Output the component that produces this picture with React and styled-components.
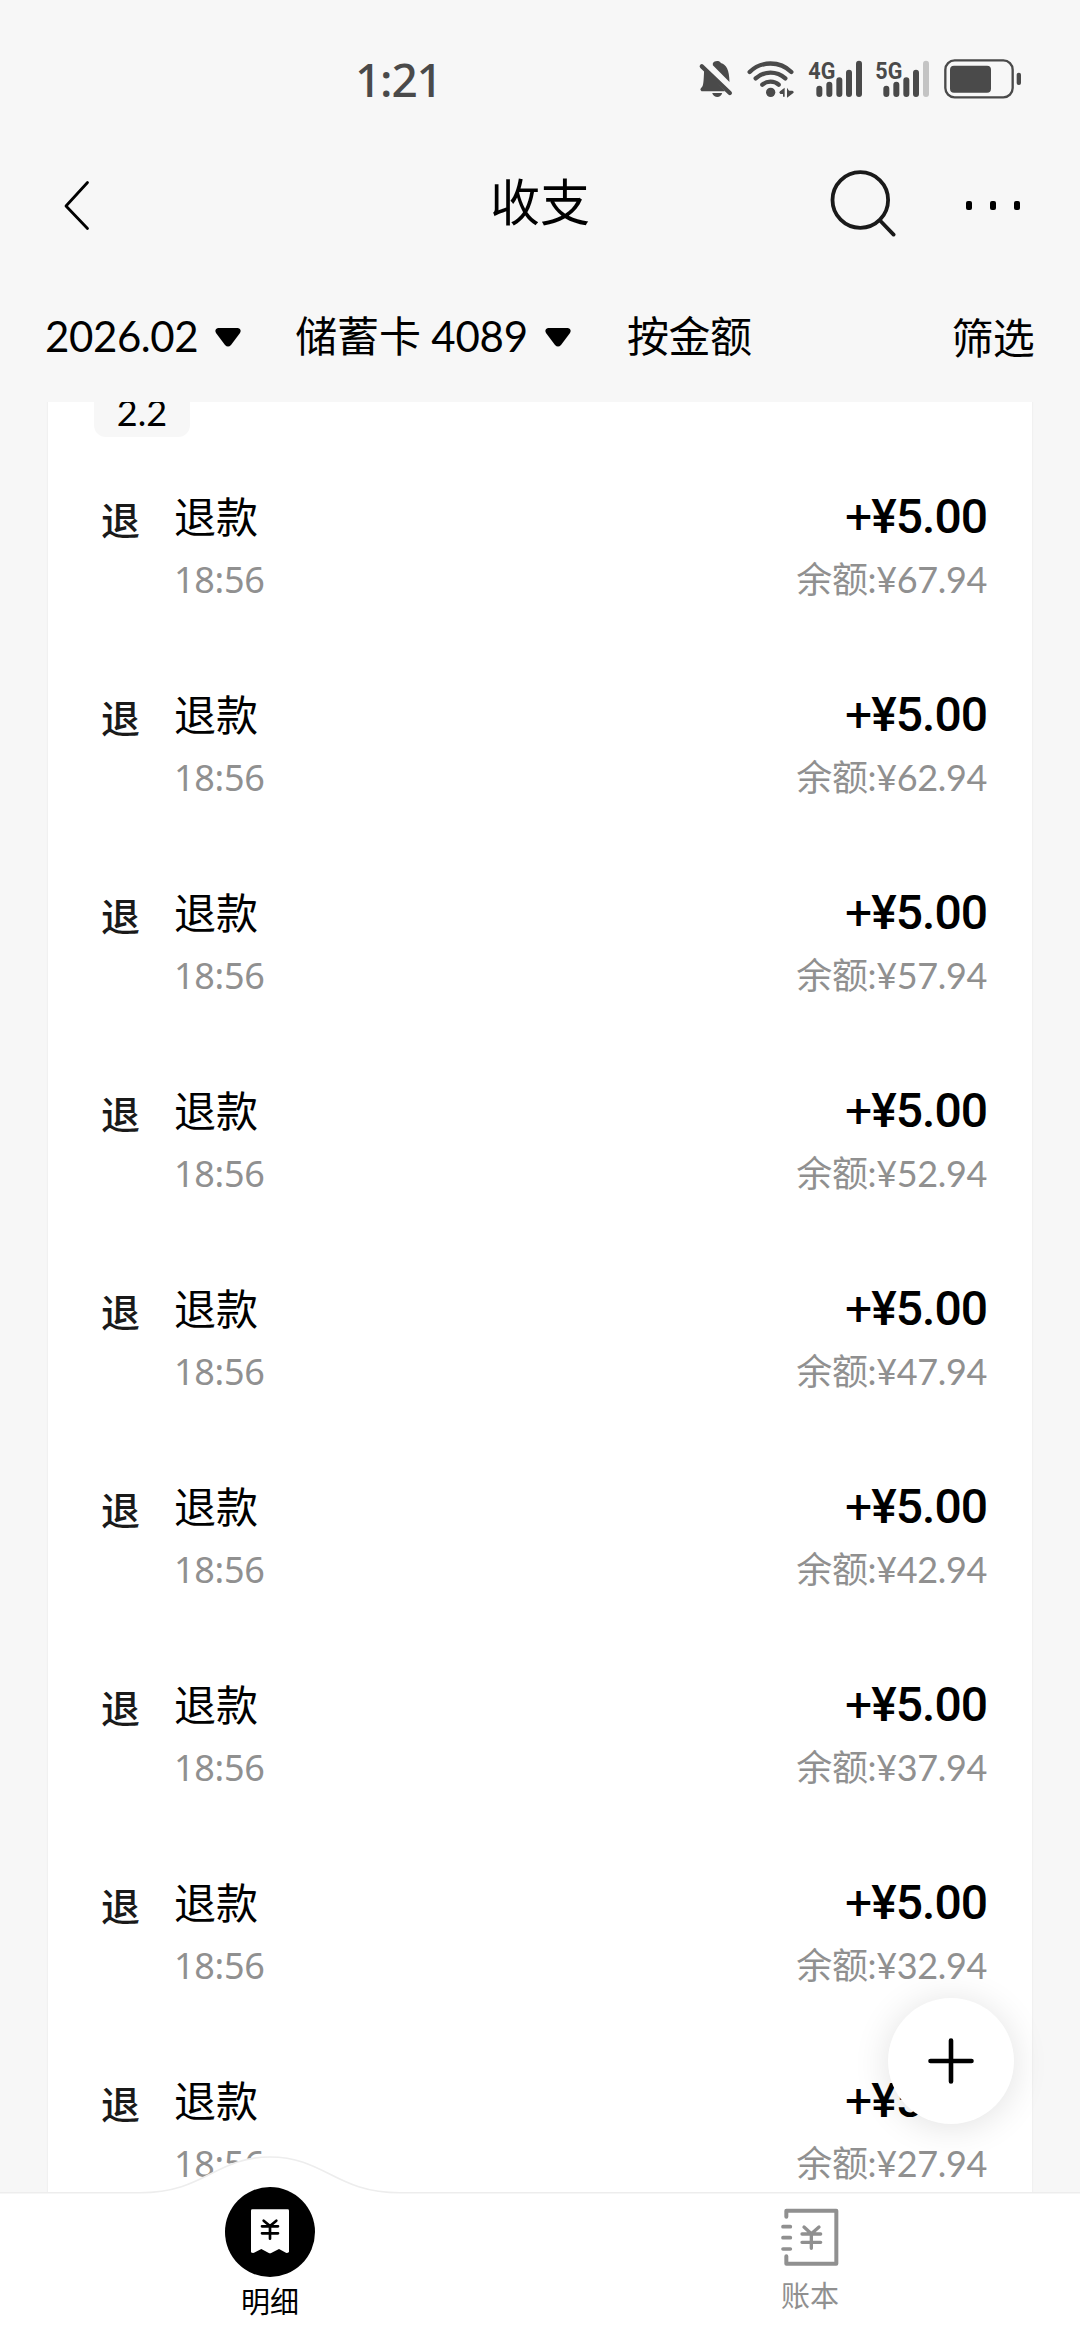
import React from "react";
import styled, { createGlobalStyle } from "styled-components";

const GlobalStyle = createGlobalStyle`
  * { box-sizing: border-box; }
  body { margin: 0; background: #f7f7f7; }
`;

const cjk = `"Noto Sans CJK SC", sans-serif`;

const Screen = styled.div`
  position: relative;
  display: flex;
  flex-direction: column;
  width: 1080px;
  height: 2340px;
  overflow: hidden;
  background: #f7f7f7;
  color: #000;
  font-family: Lato, ${cjk};
`;

const StatusBar = styled.header`
  display: flex;
  justify-content: space-between;
  height: 120px;
  padding: 0 58px 0 355px;
`;

const Clock = styled.span`
  font: 500 46px/80px "Noto Sans", sans-serif;
  padding-top: 39px;
  letter-spacing: -1.2px;
  color: #4a4a4a;
`;

const StatusIcons = styled.div`
  display: flex;
  gap: 12px;
  padding-top: 40px;
  color: #4a4a4a;
`;

const NavBar = styled.nav`
  display: grid;
  grid-template-columns: 1fr auto 1fr;
  align-items: center;
  height: 164px;
  padding: 0 60px;
`;

const Title = styled.h1`
  margin: 0;
  padding-bottom: 7px;
  font: 400 50px/60px ${cjk};
`;

const NavActions = styled.div`
  display: flex;
  justify-content: flex-end;
  align-items: center;
  gap: 68px;
`;

const Dots = styled.div`
  display: flex;
  gap: 18px;
  padding-top: 7px;
  i {
    width: 6px;
    height: 9px;
    border-radius: 2px;
    background: #000;
  }
`;

const FilterBar = styled.div`
  display: flex;
  align-items: center;
  height: 118px;
  padding: 0 46px 14px 45px;
`;

const Filter = styled.button`
  display: flex;
  align-items: center;
  gap: 17px;
  margin: ${(p) => p.$margin || "0"};
  padding: 0;
  border: 0;
  background: none;
  color: #000;
  font: 400 42px/60px Lato, ${cjk};
  letter-spacing: ${(p) => p.$spacing || "0"};
  white-space: pre;
`;

const ListArea = styled.main`
  flex: 1;
  min-height: 0;
  overflow: hidden;
  padding: 0 48px;
`;

const Card = styled.section`
  margin-top: -19px;
  background: #fff;
  box-shadow: 0 0 2px rgba(0, 0, 0, 0.08);
`;

const DateTag = styled.div`
  width: 96px;
  height: 54px;
  margin: 0 0 12px 46px;
  border-radius: 12px;
  background: #f7f7f7;
  text-align: center;
  font-size: 36px;
  line-height: 58px;
`;

const Row = styled.div`
  display: grid;
  grid-template-columns: 73px 1fr auto;
  align-items: start;
  height: 198px;
  padding: 36px 45px 0 53px;
`;

const Badge = styled.span`
  font: 500 39px/63px ${cjk};
  padding-top: 2px;
  color: #1a1a1a;
`;

const Column = styled.div`
  display: flex;
  flex-direction: column;
  align-items: ${(p) => (p.$end ? "flex-end" : "flex-start")};
`;

const Name = styled.span`
  height: 63px;
  font: 400 42px/59px ${cjk};
`;

const Time = styled.span`
  font: 400 36px/63px "Noto Sans", sans-serif;
  letter-spacing: -0.3px;
  color: #909090;
`;

const Amount = styled.span`
  font: 500 48px/63px Roboto, sans-serif;
  letter-spacing: -1px;
`;

const Sign = styled.span`
  font-weight: 400;
`;

const Balance = styled.span`
  font: 400 36px/63px Lato, ${cjk};
  letter-spacing: -0.35px;
  color: #909090;
`;

const AddButton = styled.button`
  position: absolute;
  left: 888px;
  top: 1998px;
  display: grid;
  place-items: center;
  width: 126px;
  height: 126px;
  padding: 0;
  border: 0;
  border-radius: 50%;
  background: #fff;
  box-shadow: 0 3px 36px rgba(0, 0, 0, 0.12);
`;

const TabBar = styled.footer`
  position: relative;
  display: grid;
  grid-template-columns: 1fr 1fr;
  height: 148px;
  background: #fff;
`;

const TabEdge = styled.svg`
  position: absolute;
  left: 0;
  top: -37px;
`;

const Tab = styled.div`
  position: relative;
  display: flex;
  flex-direction: column;
  align-items: center;
  margin-top: ${(p) => (p.$active ? "-5px" : "16px")};
  gap: ${(p) => (p.$active ? "2px" : "7px")};
  color: ${(p) => (p.$active ? "#000" : "#909090")};
  font: 400 29px/42px ${cjk};
`;

const Bubble = styled.div`
  display: grid;
  place-items: center;
  width: 90px;
  height: 90px;
  border-radius: 50%;
  background: #000;
`;

const BellOff = () => (
  <svg width="37" height="80" viewBox="50 0 110 240" fill="currentColor">
    <path d="M97 70C102 61 117 61 121 69C138 75 146 88 147 126L97 76Z" />
    <path d="M71 88L132 152V154H63Q57 149 61 145C69 139 69 132 71 88Z" />
    <path d="M95 159H125C121 175 100 175 95 159Z" />
    <path d="M64 79L148 159" stroke="currentColor" strokeWidth="13" strokeLinecap="round" />
  </svg>
);

const Wifi = () => (
  <svg width="50" height="80" viewBox="195 0 150 240" fill="none" stroke="currentColor" strokeWidth="13" strokeLinecap="round">
    <path d="M206 96C240 62 297 62 331 96" />
    <path d="M224 115C250 92 287 92 313 115" />
    <path d="M244 134C257 122 280 122 293 134" />
    <circle cx="269" cy="157" r="14" fill="currentColor" stroke="none" />
    <path d="M311 143V170H306V162H298Q292 158 297 154ZM318 143L324 152H334Q341 155 336 160L318 173Z" fill="currentColor" stroke="none" />
  </svg>
);

const Signal = ({ label, weak }) => (
  <svg width="55" height="80" viewBox="380 0 165 240" stroke="currentColor" strokeWidth="18" strokeLinecap="round">
    <text x="381" y="117" fontFamily="Roboto, sans-serif" fontWeight="700" fontSize="74" textLength="81" lengthAdjust="spacingAndGlyphs" fill="currentColor" stroke="none">{label}</text>
    <path d="M414 146V162M444 134V162M474 121V162M503 98V162" />
    <path d="M533 71V162" stroke={weak ? "#c4c4c4" : "currentColor"} />
  </svg>
);

const Battery = () => (
  <svg width="80" height="80" viewBox="785 0 240 240" fill="currentColor">
    <rect x="795" y="61" width="202" height="111" rx="28" fill="none" stroke="currentColor" strokeWidth="7" />
    <rect x="809" y="77" width="123" height="81" rx="12" />
    <rect x="1009" y="98" width="13" height="37" rx="6" />
  </svg>
);

const BackIcon = () => (
  <svg width="40" height="60" viewBox="61 172 40 60" fill="none" stroke="#000" strokeWidth="2.8" strokeLinecap="round" strokeLinejoin="round">
    <path d="M88.5 182.5L67 206L88.5 228.5" />
  </svg>
);

const SearchIcon = () => (
  <svg width="70" height="70" viewBox="827 167 70 70" fill="none" stroke="#1a1a1a" strokeWidth="3.8" strokeLinecap="round">
    <circle cx="859.3" cy="200" r="27.8" />
    <path d="M879.5 221L892.6 234.6" />
  </svg>
);

const Caret = () => (
  <svg width="26" height="22" viewBox="0 0 26 22">
    <path d="M3 3H23Q27 4 25 8L16 20Q13 23 10 20L1 8Q-1 4 3 3Z" />
  </svg>
);

const PlusIcon = () => (
  <svg width="48" height="48" viewBox="0 0 48 48" stroke="#000" strokeWidth="4.6" strokeLinecap="round">
    <path d="M3.5 24H44.5M24 3.5V44.5" />
  </svg>
);

const ReceiptIcon = () => (
  <svg width="40" height="46" viewBox="750 446 120 138">
    <path d="M757 447H863Q867 447 867 451V575Q861 580 855 576L837 566L815 577Q810 580 805 577L784 566L765 576Q759 580 753 576V451Q753 447 757 447Z" fill="#fff" />
    <path d="M791 481L810 497L829 481M786 498H834M786 519H834M810 498V535" fill="none" stroke="#000" strokeWidth="8" strokeLinecap="round" />
  </svg>
);

const LedgerIcon = () => (
  <svg width="58" height="58" viewBox="179 742 174 174" fill="none" stroke="#909090" strokeWidth="11" strokeLinecap="round" strokeLinejoin="round">
    <path d="M195 768V750H345V909H195V887" strokeWidth="12" />
    <path d="M185 798H207M185 831H207M185 865H207" />
    <path d="M248 799L270 819L293 799M242 820H298M242 845H298M270 820V863" strokeWidth="10" />
  </svg>
);

const balances = ["67.94", "62.94", "57.94", "52.94", "47.94", "42.94", "37.94", "32.94", "27.94"];

export default function App() {
  return (
    <Screen>
      <GlobalStyle />
      <StatusBar>
        <Clock>1:21</Clock>
        <StatusIcons>
          <BellOff />
          <Wifi />
          <Signal label="4G" />
          <Signal label="5G" weak />
          <Battery />
        </StatusIcons>
      </StatusBar>
      <NavBar>
        <BackIcon />
        <Title>收支</Title>
        <NavActions>
          <SearchIcon />
          <Dots><i /><i /><i /></Dots>
        </NavActions>
      </NavBar>
      <FilterBar>
        <Filter $spacing="-0.4px">2026.02<Caret /></Filter>
        <Filter $margin="0 0 0 54px" $spacing="-0.2px">储蓄卡 4089<Caret /></Filter>
        <Filter $margin="0 0 0 56px" $spacing="-0.4px">按金额</Filter>
        <Filter $margin="4px 0 0 auto" $spacing="-0.8px">筛选</Filter>
      </FilterBar>
      <ListArea>
        <Card>
          <DateTag>2.2</DateTag>
          {balances.map((balance) => (
            <Row key={balance}>
              <Badge>退</Badge>
              <Column>
                <Name>退款</Name>
                <Time>18:56</Time>
              </Column>
              <Column $end>
                <Amount><Sign>+</Sign>¥5.00</Amount>
                <Balance>余额:¥{balance}</Balance>
              </Column>
            </Row>
          ))}
        </Card>
      </ListArea>
      <AddButton aria-label="添加"><PlusIcon /></AddButton>
      <TabBar>
        <TabEdge width="1080" height="42" viewBox="0 2155 1080 42">
          <path d="M0 2192.7H140C205 2192.7 215 2157 270 2157S335 2192.7 400 2192.7H1080V2197H0Z" fill="#fff" />
          <path d="M0 2192.7H140C205 2192.7 215 2157 270 2157S335 2192.7 400 2192.7H1080" fill="none" stroke="#ededed" strokeWidth="1.6" />
        </TabEdge>
        <Tab $active>
          <Bubble><ReceiptIcon /></Bubble>
          明细
        </Tab>
        <Tab>
          <LedgerIcon />
          账本
        </Tab>
      </TabBar>
    </Screen>
  );
}
